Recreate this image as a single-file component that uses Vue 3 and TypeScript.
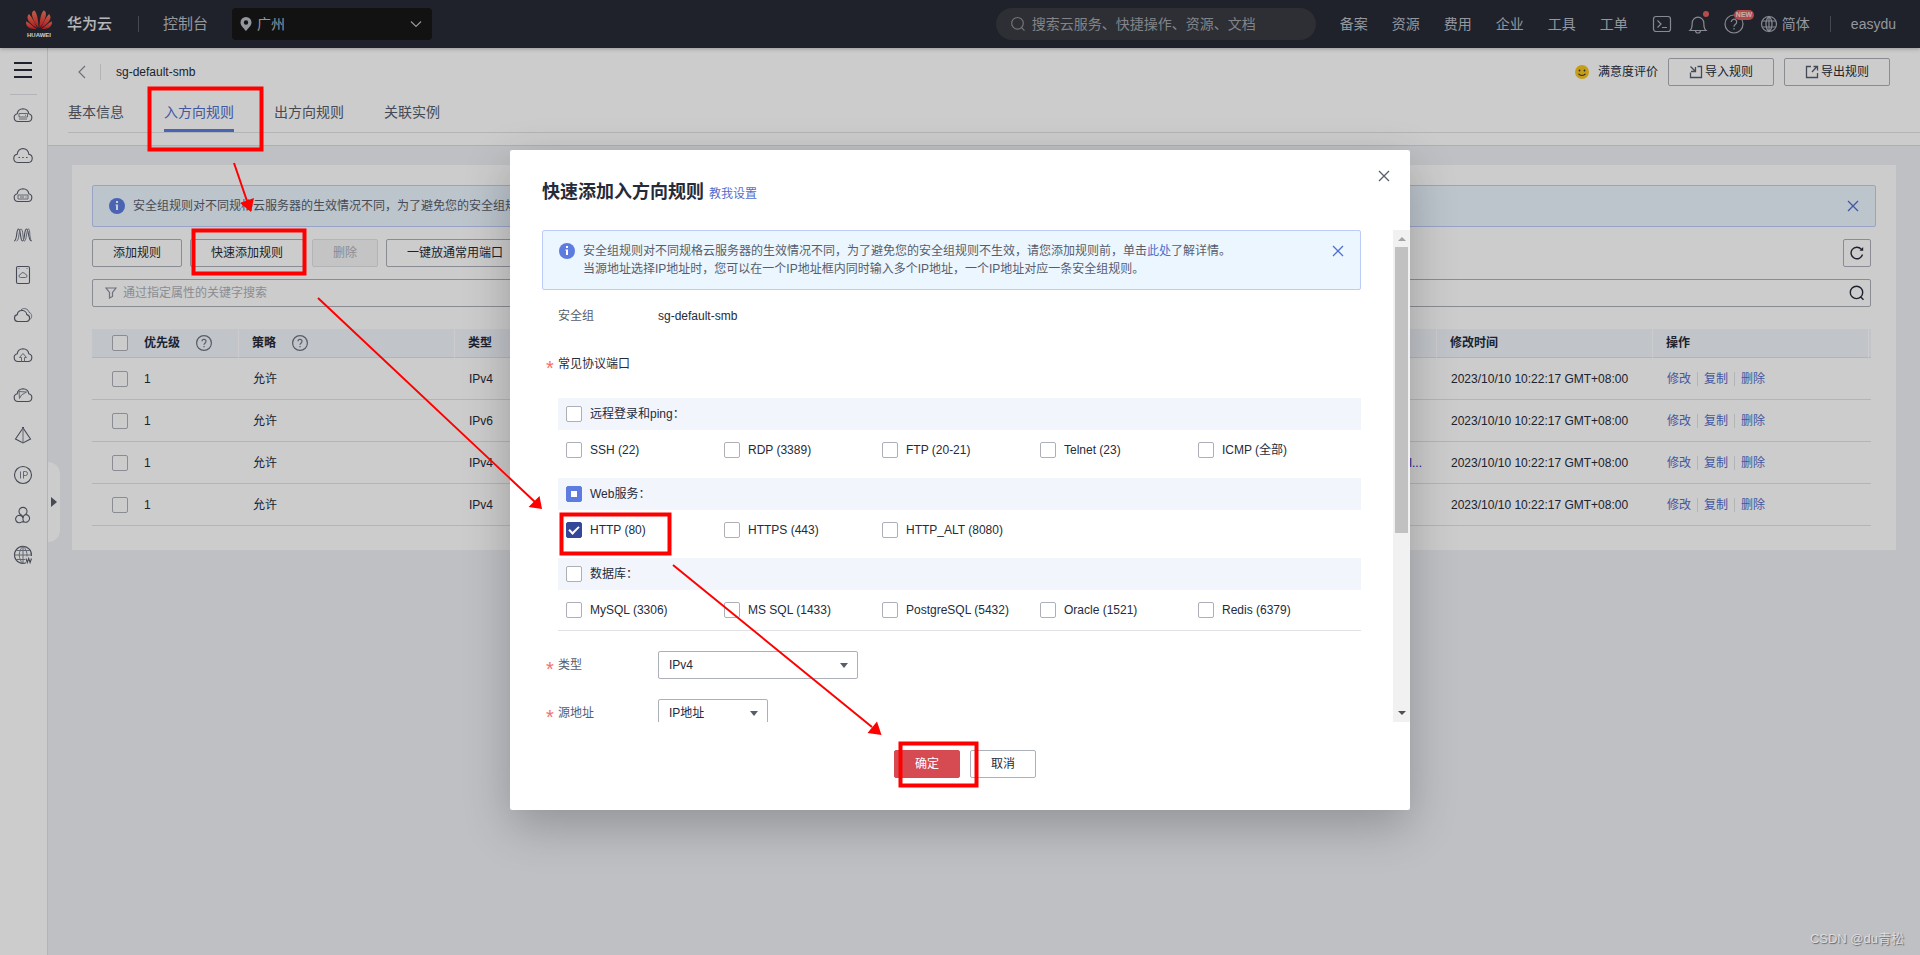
<script setup lang="ts">
import { ref } from 'vue'

interface Rule { type: string; source: string; time: string }
interface Port { label: string; checked: boolean }
interface Group { label: string; checked: boolean; partial: boolean; ports: Port[] }

const navLinks: string[] = ['备案', '资源', '费用', '企业', '工具', '工单']
const tabs: string[] = ['基本信息', '入方向规则', '出方向规则', '关联实例']
const activeTab = ref('入方向规则')

const time = '2023/10/10 10:22:17 GMT+08:00'
const rules: Rule[] = [
  { type: 'IPv4', source: '', time },
  { type: 'IPv6', source: '', time },
  { type: 'IPv4', source: 'l...', time },
  { type: 'IPv4', source: '', time },
]

const port = (label: string, checked = false): Port => ({ label, checked })
const groups = ref<Group[]>([
  {
    label: '远程登录和ping：', checked: false, partial: false,
    ports: [port('SSH (22)'), port('RDP (3389)'), port('FTP (20-21)'), port('Telnet (23)'), port('ICMP (全部)')],
  },
  {
    label: 'Web服务：', checked: false, partial: true,
    ports: [port('HTTP (80)', true), port('HTTPS (443)'), port('HTTP_ALT (8080)')],
  },
  {
    label: '数据库：', checked: false, partial: false,
    ports: [port('MySQL (3306)'), port('MS SQL (1433)'), port('PostgreSQL (5432)'), port('Oracle (1521)'), port('Redis (6379)')],
  },
])

const cloud = 'M5 16.500h10a3.900 3.900 0 0 0 .8-7.700A6 6 0 0 0 10 3.800a6 6 0 0 0-5.800 5A3.900 3.900 0 0 0 5 16.500z'
const sideIcons: { name: string; main: string; fine: string }[] = [
  { name: '云服务器', main: cloud, fine: 'M6 8.500h8.500V12H6zM6 14h8M12 10.200h1' },
  { name: '弹性云', main: 'M4.500 17.500h11a4.200 4.200 0 0 0 .3-8.300A6 6 0 0 0 10 3.500a6 6 0 0 0-5.800 5.700 4.200 4.200 0 0 0 .3 8.300zM5.500 12.500h1.500M9.200 12.500h1.500M13 12.500h1.500', fine: '' },
  { name: '裸金属', main: cloud, fine: 'M5 10h10v4H5zM7 12h4M12.500 12h1' },
  { name: '弹性伸缩', main: 'M1 16c3.500 0 2-12 4.500-12S7 16 9.500 16 11 4 13.500 4s1.500 12 5 12', fine: 'M3.500 16c3 0 2-12 4.500-12S9.500 16 11.500 16s2-12 4-12 .5 9 3 12' },
  { name: '镜像', main: 'M5 1.500h10a1.500 1.500 0 0 1 1.500 1.500v14a1.500 1.500 0 0 1-1.500 1.500H5A1.500 1.500 0 0 1 3.500 17V3A1.500 1.500 0 0 1 5 1.500z', fine: 'M7.500 12.500h5a1.500 1.500 0 0 0 0-3 2.600 2.600 0 0 0-5 0 1.500 1.500 0 0 0 0 3zM5.500 3.500h1M13.500 3.500h1' },
  { name: '云硬盘', main: 'M4.500 16.500h9a3.500 3.500 0 0 0 .3-6.900A4.600 4.600 0 0 0 9 5.500a4.600 4.600 0 0 0-4.700 4.100 3.500 3.500 0 0 0 .2 6.900z', fine: 'M8 4.800c3-2.600 7.500-.8 8 2.500 3.200 1 3.400 5.500 1.200 7' },
  { name: '云备份', main: cloud, fine: 'M8.500 16.500v-4H6.500L10 8.500l3.500 4h-2v4' },
  { name: '云容灾', main: cloud, fine: 'M6 6.500l.5 7L8.500 10l5-3-7.500-.5' },
  { name: '网络', main: 'M10 3L2.500 14 10 18l7.500-4zM9 2.500h2', fine: 'M10 3v15' },
  { name: '弹性公网IP', main: 'M10 1.500a8.500 8.500 0 1 0 0 17 8.500 8.500 0 0 0 0-17z', fine: 'M7.500 6.500v7M10.500 13.500v-7h2a2 2 0 0 1 0 4h-2' },
  { name: '集群', main: 'M7.500 9.500a4 4 0 1 1 5 0M10 13.500a3.700 3.700 0 1 0-1.300 3.400M7.500 9.600c1.500.6 2.500 1.900 2.500 3.900M12.500 9.600c-1.500.6-2.500 1.900-2.500 3.900a3.700 3.700 0 0 0 1.300 3.400M12.500 9.600a3.800 3.800 0 1 1-1.200 7.300M8.700 16.900h2.600', fine: '' },
  { name: '域名', main: 'M13 17.800A8.500 8.500 0 1 1 18.400 11M13 13.500l1.300 4 1.400-4 1.400 4 1.400-4', fine: 'M10 1.500C5 6 5 14 10 18.500M10 1.500c3 2.500 4.300 6 4 10M10 1.500v17M1.500 10h17M3 5.500h14M3 14.500h9' },
]
</script>

<template>
  <div class="page">
    <header class="topbar">
      <svg class="logo" viewBox="0 0 28 30" role="img" aria-label="HUAWEI">
        <defs>
          <linearGradient id="petal" x1="0" y1="0" x2="0" y2="1">
            <stop offset="0" stop-color="#f0785a" /><stop offset="1" stop-color="#e01f26" />
          </linearGradient>
        </defs>
        <g fill="url(#petal)">
          <path d="M13.500 19C13.300 11.500 12.500 5.500 9.500 1.500 7 2 6.500 5 7.500 8c1 4 3.500 8 6 11z" />
          <path d="M14.500 19c.2-7.500 1-13.500 4-17.500 2.500.5 3 3.500 2 6.500-1 4-3.500 8-6 11z" />
          <path d="M12.300 19.200C9.500 13.500 7.500 9 4 5 1.500 7.500 2.500 10.500 4.500 13c2 2.500 5 4.500 7.800 6.200z" />
          <path d="M15.700 19.200C18.500 13.500 20.500 9 24 5c2.500 2.500 1.500 5.500-.5 8-2 2.500-5 4.500-7.800 6.200z" />
          <path d="M11.500 19.900C8 17.200 5 14.400 1.300 12.200.5 15.300 2 17.700 4.500 18.900c2 .9 4.500 1 7 1z" />
          <path d="M16.500 19.900c3.500-2.700 6.500-5.500 10.200-7.700.8 3.100-.7 5.500-3.200 6.700-2 .9-4.500 1-7 1z" />
        </g>
        <text x="14" y="28" text-anchor="middle" font-size="6" font-weight="bold" fill="#fff">HUAWEI</text>
      </svg>
      <span class="brand">华为云</span>
      <i class="bar-divider"></i>
      <a href="#" class="console">控制台</a>
      <button class="region" type="button">
        <svg width="12" height="16" viewBox="0 0 12 16"><path fill="#b9bdc6" fill-rule="evenodd" d="M6 1a5.500 5.500 0 0 0-5.500 5.500C.5 9.500 3.500 12 6 15c2.500-3 5.500-5.500 5.500-8.500A5.500 5.500 0 0 0 6 1zm0 3.300a2.200 2.200 0 1 1 0 4.400 2.200 2.200 0 0 1 0-4.400z" /></svg>
        <span>广州</span>
        <svg class="end" width="12" height="8" viewBox="0 0 12 8"><path d="M1 1.500l5 5 5-5" fill="none" stroke="#b9bdc6" stroke-width="1.200" /></svg>
      </button>
      <div class="global-search">
        <svg width="16" height="16" viewBox="0 0 16 16"><path d="M7.500 1.500a5.800 5.800 0 1 0 0 11.600 5.800 5.800 0 0 0 0-11.600zM11.500 11.500l3 3.200" fill="none" stroke="#8d9097" stroke-width="1.200" /></svg>
        <input type="text" aria-label="搜索" placeholder="搜索云服务、快捷操作、资源、文档" />
      </div>
      <nav class="nav">
        <a v-for="l in navLinks" :key="l" href="#">{{ l }}</a>
      </nav>
      <div class="tools">
        <svg width="20" height="20" viewBox="0 0 20 20" class="line"><rect x="1.500" y="2.500" width="17" height="15" rx="2.500" /><path d="M5.500 6.500L9 10l-3.500 3.500M10 13.500h5" /></svg>
        <span class="badge-box">
          <svg width="20" height="20" viewBox="0 0 20 20" class="line"><path d="M2 16.500c1.800-1.500 2.200-3.500 2.200-7.500a5.800 5.800 0 0 1 11.600 0c0 4 .4 6 2.200 7.500zM7.500 16.500a2.500 2.500 0 0 0 5 0" /></svg>
          <i class="dot"></i>
        </span>
        <span class="badge-box">
          <svg width="20" height="20" viewBox="0 0 20 20" class="line"><circle cx="10" cy="10" r="9" /><path d="M7.300 8a2.700 2.700 0 1 1 4.200 2.200c-1 .7-1.500 1.200-1.500 2.500M10 14v1.500" /></svg>
          <b class="new">NEW</b>
        </span>
        <a href="#" class="lang">
          <svg width="18" height="18" viewBox="0 0 18 18" class="line"><circle cx="9" cy="9" r="7.500" /><path d="M9 1.500C5 5 5 13 9 16.500 13 13 13 5 9 1.500zM9 1.500v15M2.300 6h13.400M2.300 12h13.400" /></svg>
          简体
        </a>
      </div>
      <i class="bar-divider user-divider"></i>
      <a href="#" class="user">easydu</a>
    </header>

    <div class="frame">
      <aside class="side">
        <button type="button" class="menu" aria-label="菜单"><i></i><i></i><i></i></button>
        <hr />
        <a v-for="ic in sideIcons" :key="ic.name" href="#" :aria-label="ic.name">
          <svg width="20" height="20" viewBox="0 0 20 20"><path :d="ic.main" /><path v-if="ic.fine" class="fine" :d="ic.fine" /></svg>
        </a>
        <button type="button" class="handle" aria-label="展开"></button>
      </aside>

      <main class="main">
        <section class="head">
          <div class="title-row">
            <a href="#" class="back" aria-label="返回"><svg width="9" height="14" viewBox="0 0 9 14"><path d="M8 1L2 7l6 6" fill="none" stroke="#8a8e99" stroke-width="1.200" /></svg></a>
            <i class="sep"></i>
            <h1>sg-default-smb</h1>
            <div class="head-actions">
              <svg width="16" height="16" viewBox="0 0 16 16"><circle cx="8" cy="8" r="7" fill="#f7c51e" /><circle cx="5.500" cy="6.500" r=".9" fill="#333" /><circle cx="10.500" cy="6.500" r=".9" fill="#333" /><path d="M4.500 9.800c1.500 2.200 5.500 2.200 7 0" fill="none" stroke="#333" stroke-width="1.100" /></svg>
              <a href="#" class="rate">满意度评价</a>
              <button type="button" class="btn io"><svg width="14" height="14" viewBox="0 0 14 14"><path d="M1.500 7.500v5h11v-11H8.500" /><path d="M1.500 1.500L6 6M6.500 2v4.500H2" /></svg>导入规则</button>
              <button type="button" class="btn io"><svg width="14" height="14" viewBox="0 0 14 14"><path d="M6 1.500H1.500v11h11V8" /><path d="M7 7l5-5.500M8.500 1.500H12.500v4" /></svg>导出规则</button>
            </div>
          </div>
          <nav class="tabs">
            <a v-for="t in tabs" :key="t" href="#" :class="{ on: t === activeTab }" @click.prevent="activeTab = t">{{ t }}</a>
          </nav>
        </section>

        <section class="card">
          <div class="alert page-alert">
            <svg class="info" width="16" height="16" viewBox="0 0 16 16"><circle cx="8" cy="8" r="8" fill="#5e7ce0" /><path d="M7 3h2v2H7zM6.500 6.500H9V12H7V7.500h-.5z" fill="#fff" /></svg>
            <p>安全组规则对不同规格云服务器的生效情况不同，为了避免您的安全组规则</p>
            <button type="button" class="x" aria-label="关闭提示"><svg width="12" height="12" viewBox="0 0 12 12"><path d="M1 1l10 10M11 1L1 11" /></svg></button>
          </div>
          <div class="content">
            <div class="toolbar">
              <button type="button" class="btn">添加规则</button>
              <button type="button" class="btn">快速添加规则</button>
              <button type="button" class="btn" disabled>删除</button>
              <button type="button" class="btn">一键放通常用端口</button>
              <button type="button" class="btn refresh" aria-label="刷新"><svg width="16" height="16" viewBox="0 0 16 16"><path d="M13.500 9.500A5.800 5.800 0 1 1 12.300 4.200" fill="none" stroke="#252b3a" stroke-width="1.400" /><path d="M14.200 2v3.800H10.500z" fill="#252b3a" /></svg></button>
            </div>
            <div class="filter">
              <svg width="12" height="12" viewBox="0 0 12 12"><path d="M1 1h10L7.500 5.500v4L4.500 11V5.500z" fill="none" stroke="#8a8e99" stroke-width="1.200" /></svg>
              <input type="text" aria-label="过滤" placeholder="通过指定属性的关键字搜索" />
              <svg width="16" height="16" viewBox="0 0 16 16"><path d="M7.500 1.200a6.200 6.200 0 1 0 0 12.400 6.200 6.200 0 0 0 0-12.400zM11.500 11.800l3 3" fill="none" stroke="#252b3a" stroke-width="1.400" /></svg>
            </div>
            <table>
              <colgroup>
                <col class="c-check" /><col class="c-prio" /><col class="c-wide" /><col class="c-wide" /><col />
                <col class="c-wide" /><col class="c-wide" /><col class="c-end" />
              </colgroup>
              <thead>
                <tr>
                  <th><input type="checkbox" class="cb" aria-label="全选" /></th>
                  <th class="prio"><span class="th">优先级 <svg width="16" height="16" viewBox="0 0 16 16" class="q"><circle cx="8" cy="8" r="7.400" /><path d="M6 6.300a2 2 0 1 1 3.200 1.600C8.400 8.500 8 8.800 8 9.800M8 11v1.200" /></svg></span></th>
                  <th><span class="th">策略 <svg width="16" height="16" viewBox="0 0 16 16" class="q"><circle cx="8" cy="8" r="7.400" /><path d="M6 6.300a2 2 0 1 1 3.200 1.600C8.400 8.500 8 8.800 8 9.800M8 11v1.200" /></svg></span></th>
                  <th>类型</th><th></th><th>修改时间</th><th>操作</th><th></th>
                </tr>
              </thead>
              <tbody>
                <tr v-for="(r, i) in rules" :key="i">
                  <td><input type="checkbox" class="cb" :aria-label="'选择规则' + (i + 1)" /></td>
                  <td class="prio">1</td>
                  <td>允许</td>
                  <td>{{ r.type }}</td>
                  <td class="src">{{ r.source }}</td>
                  <td>{{ r.time }}</td>
                  <td><span class="ops"><a href="#">修改</a><a href="#">复制</a><a href="#">删除</a></span></td>
                  <td></td>
                </tr>
              </tbody>
            </table>
          </div>
        </section>
      </main>
    </div>

    <div class="mask">
      <form class="modal" role="dialog" aria-labelledby="dlg-title" @submit.prevent>
        <div class="modal-head">
          <h2 id="dlg-title">快速添加入方向规则</h2>
          <a href="#">教我设置</a>
          <button type="button" class="x close" aria-label="关闭"><svg width="12" height="12" viewBox="0 0 12 12"><path d="M1 1l10 10M11 1L1 11" /></svg></button>
        </div>
        <div class="modal-body">
          <div class="scroll">
            <div class="alert">
              <svg class="info" width="16" height="16" viewBox="0 0 16 16"><circle cx="8" cy="8" r="8" fill="#5e7ce0" /><path d="M7 3h2v2H7zM6.500 6.500H9V12H7V7.500h-.5z" fill="#fff" /></svg>
              <p>安全组规则对不同规格云服务器的生效情况不同，为了避免您的安全组规则不生效，请您添加规则前，单击<a href="#">此处</a>了解详情。<br />当源地址选择IP地址时，您可以在一个IP地址框内同时输入多个IP地址，一个IP地址对应一条安全组规则。</p>
              <button type="button" class="x" aria-label="关闭提示"><svg width="12" height="12" viewBox="0 0 12 12"><path d="M1 1l10 10M11 1L1 11" /></svg></button>
            </div>
            <div class="field">
              <span class="label">安全组</span><span class="dark">sg-default-smb</span>
            </div>
            <div class="field"><span class="label req dark">常见协议端口</span></div>
            <div class="groups">
              <fieldset v-for="g in groups" :key="g.label">
                <label class="group-head">
                  <input v-model="g.checked" type="checkbox" class="cb" :indeterminate="g.partial" />{{ g.label }}
                </label>
                <div class="ports">
                  <label v-for="p in g.ports" :key="p.label"><input v-model="p.checked" type="checkbox" class="cb" />{{ p.label }}</label>
                </div>
              </fieldset>
            </div>
            <div class="field select-field">
              <label class="label req" for="ip-type">类型</label>
              <span class="select wide"><select id="ip-type"><option>IPv4</option></select></span>
            </div>
            <div class="field select-field">
              <label class="label req" for="source">源地址</label>
              <span class="select"><select id="source"><option>IP地址</option></select></span>
            </div>
          </div>
          <div class="scrollbar"><i class="up"></i><i class="thumb"></i><i class="down"></i></div>
        </div>
        <div class="modal-foot">
          <button type="submit" class="btn primary">确定</button>
          <button type="button" class="btn">取消</button>
        </div>
      </form>
    </div>

    <svg class="marks" width="1920" height="955" viewBox="0 0 1920 955" aria-hidden="true">
      <g fill="none" stroke="#f00" stroke-width="4">
        <rect x="149.500" y="88.500" width="112" height="61" /><rect x="193.500" y="230.500" width="111" height="43" />
        <rect x="561.500" y="514.500" width="108" height="39" /><rect x="900.500" y="743.500" width="76" height="42" />
      </g>
      <g stroke="#f00" stroke-width="2"><path d="M234 163L247 201M318 298L535 502M673 565L872 727" /></g>
      <g fill="#f00"><path d="M251 212L240 203 254 198zM542 509L528.500 507 539.500 496zM881.500 735L867.500 733 877 721.500z" /></g>
    </svg>
    <span class="watermark">CSDN @du青松</span>
  </div>
</template>

<style>
html, body { margin: 0; height: 100%; }
</style>

<style scoped>
.page { position: relative; min-height: 100vh; display: flex; flex-direction: column; background: #eff0f5; font: 12px/18px "Liberation Sans", "Noto Sans CJK SC", sans-serif; color: #252b3a; overflow: hidden; }
.page *, .page *::before { box-sizing: border-box; }
a { color: #526ecc; text-decoration: none; }
button, input, select { font: inherit; color: inherit; margin: 0; padding: 0; }
button { background: none; border: 0; }
h1, h2, p, fieldset, hr { margin: 0; padding: 0; border: 0; font-weight: normal; }
svg { flex: none; display: block; }

.topbar { height: 48px; display: flex; align-items: center; padding: 0 24px 0 25px; background: #272b35; font-size: 14px; color: #b9bdc6; box-shadow: 0 1px 4px rgba(0, 0, 0, .25); z-index: 1; }
.topbar a { color: #b9bdc6; white-space: nowrap; }
.logo { width: 28px; height: 30px; }
.brand { margin-left: 14px; font-size: 15px; font-weight: 500; color: #e4e6ea; }
.bar-divider { width: 1px; height: 16px; background: #575b66; margin-left: 26px; }
.topbar .console { margin-left: 24px; font-size: 15px; }
.region { display: flex; align-items: center; gap: 5px; width: 200px; height: 32px; margin-left: 24px; padding: 0 10px 0 8px; border-radius: 4px; background: #171717; text-align: left; }
.region .end { margin-left: auto; }
.global-search { display: flex; align-items: center; gap: 6px; width: 320px; height: 32px; margin-left: auto; padding: 0 14px; border-radius: 16px; background: #393b41; }
.global-search input { flex: 1; min-width: 0; border: 0; background: none; outline: 0; }
.global-search input::placeholder { color: #a3a6ad; }
.nav { display: flex; gap: 24px; margin-left: 24px; }
.tools { display: flex; align-items: center; gap: 16px; margin-left: 24px; }
.line { fill: none; stroke: #a9adb6; stroke-width: 1.200; }
.badge-box { position: relative; }
.dot { position: absolute; right: -1px; top: -3px; width: 6px; height: 6px; border-radius: 50%; background: #e56060; }
.new { position: absolute; left: 10px; top: -4px; padding: 0 2px; border-radius: 5px; background: #e05c5c; color: #f4dede; font-size: 7px; line-height: 10px; }
.lang { display: flex; align-items: center; gap: 4px; }
.user-divider { margin-left: 20px; }
.topbar .user { margin-left: 20px; }

.frame { flex: 1; display: flex; }
.side { position: relative; width: 48px; background: #fff; border-right: 1px solid #dfe1e6; display: flex; flex-direction: column; align-items: flex-start; }
.side > a { height: 40px; width: 46px; display: flex; align-items: center; justify-content: center; }
.side > a svg { fill: none; stroke: #575d6c; stroke-width: 1.100; }
.side > a .fine { stroke: #7d8290; stroke-width: 1; }
.menu { display: flex; flex-direction: column; gap: 5px; width: 18px; margin: 14px 0 16px 14px; }
.menu i { height: 2px; background: #252b3a; }
.side hr { width: 27px; height: 1px; margin-left: 10px; background: #dfe1e6; }
.handle { position: absolute; left: 48px; top: 414px; width: 12px; height: 80px; border-radius: 0 12px 12px 0; background: #fff; }
.handle::before { content: ""; display: block; width: 6px; margin-left: 3px; border: 5px solid transparent; border-left: 6px solid #575d6c; border-right: 0; }
.main { flex: 1; min-width: 0; }

.head { height: 98px; background: #fff; border-bottom: 1px solid #d9dbdf; padding-left: 20px; }
.title-row { display: flex; align-items: center; height: 48px; padding: 0 30px 0 9px; }
.sep { width: 1px; height: 16px; background: #dfe1e6; margin: 0 15px 0 14px; }
h1 { font-size: 12px; }
.head-actions { margin-left: auto; display: flex; align-items: center; }
.rate { margin: 0 10px 0 8px; color: #252b3a; }
.btn { height: 28px; padding: 0 20px; border: 1px solid #adb0b8; border-radius: 2px; white-space: nowrap; }
.btn:disabled { color: #adb0b8; background: #f5f5f6; border-color: #dfe1e6; }
.io { display: flex; align-items: center; justify-content: center; gap: 2px; width: 106px; padding: 0 18px; }
.io svg { fill: none; stroke: #575d6c; stroke-width: 1.300; }
.io + .io { margin-left: 10px; }
.tabs { display: flex; gap: 40px; height: 37px; border-bottom: 1px solid #dfe1e6; }
.tabs a { height: 36px; padding-top: 7px; font-size: 14px; color: #575d6c; border-bottom: 3px solid transparent; }
.tabs a.on { color: #526ecc; border-color: #5e7ce0; }

.card { margin: 19px 24px 0; padding: 20px 20px 24px; background: #fff; }
.alert { display: flex; align-items: flex-start; padding: 11px 20px 11px 16px; background: #ebf6ff; border: 1px solid #beccfa; border-radius: 2px; color: #575d6c; }
.alert .info { margin-top: 1px; }
.alert p { flex: 1; margin-left: 8px; white-space: nowrap; overflow: hidden; }
.x { padding: 3px 0; }
.x svg { fill: none; stroke: #526ecc; stroke-width: 1.300; }
.page-alert { height: 42px; padding-right: 16px; }
.content { padding-right: 5px; }
.toolbar { display: flex; gap: 8px; padding: 12px 0; }
.refresh { width: 28px; margin-left: auto; display: flex; align-items: center; justify-content: center; }
.toolbar .refresh { padding: 0; }
.filter { display: flex; align-items: center; height: 28px; padding: 0 5px 0 12px; border: 1px solid #adb0b8; border-radius: 2px; }
.filter input { flex: 1; min-width: 0; margin-left: 6px; border: 0; background: none; outline: 0; }
.filter input::placeholder { color: #adb0b8; }

table { width: 100%; margin-top: 22px; table-layout: fixed; border-collapse: separate; border-spacing: 0; }
.c-check { width: 48px; }
.c-prio { width: 98px; }
.c-wide { width: 216px; }
.c-end { width: 3px; }
th, td { padding: 0 0 0 15px; text-align: left; white-space: nowrap; border-bottom: 1px solid #dfe1e6; }
th { height: 29px; padding-left: 13px; background: #f2f5fc; font-weight: bold; border-left: 1px solid #fff; }
th:nth-child(-n+2) { border-left: 0; }
th:first-child, td:first-child { padding-left: 20px; }
th:last-child, td:last-child { padding: 0; }
.prio { padding-left: 4px; }
td { height: 42px; }
.th { display: flex; align-items: center; gap: 16px; }
.q { fill: none; stroke: #6d7280; stroke-width: 1.200; }
td.src { text-align: right; padding: 0 14px 0 0; color: #2418b8; }
.ops { display: flex; align-items: center; }
.ops a + a { margin-left: 6px; padding-left: 6px; border-left: 1px solid #dfe1e6; line-height: 14px; }

.cb { appearance: none; display: block; flex: none; width: 16px; height: 16px; border: 1px solid #adb0b8; border-radius: 2px; background: #fff; }
.cb:checked { background: #344899; border-color: #344899; }
.cb:checked::before { content: ""; display: block; width: 10px; height: 6px; margin: 3px 0 0 2px; border: solid #fff; border-width: 0 0 2px 2px; transform: rotate(-45deg); }
.cb:indeterminate { background: #5e7ce0; border-color: #5e7ce0; }
.cb:indeterminate::before { content: ""; display: block; width: 6px; height: 6px; margin: 4px; background: #fff; }

.mask { position: absolute; inset: 0; z-index: 2; display: flex; justify-content: center; align-items: flex-start; padding-top: 150px; background: rgba(0, 0, 0, .2); }
.modal { width: 900px; padding-bottom: 32px; background: #fff; border-radius: 2px; box-shadow: 0 16px 48px rgba(0, 0, 0, .24); }
.modal-head { display: flex; align-items: baseline; gap: 5px; height: 80px; padding: 29px 20px 0 32px; }
h2 { font-size: 18px; line-height: 26px; font-weight: bold; }
.close { align-self: flex-start; margin: -12px 0 0 auto; }
.close svg { stroke: #575d6c; }
.modal-body { display: flex; height: 492px; overflow: hidden; }
.scroll { flex: 1; min-width: 0; height: 492px; overflow: hidden; padding: 0 32px; }
.scroll .alert { height: 60px; padding-right: 16px; }
.field { display: flex; align-items: center; height: 18px; margin-top: 30px; padding-left: 16px; color: #252b3a; }
.alert + .field { margin-top: 17px; }
.label { position: relative; width: 100px; color: #575d6c; }
.dark { color: #252b3a; }
.req::before { content: "*"; position: absolute; left: -12px; top: 4px; font-size: 20px; color: #f66f6a; }
.groups { margin: 25px 0 0 16px; border-bottom: 1px solid #dfe1e6; }
.group-head, .ports label { display: flex; align-items: center; gap: 8px; }
.group-head { height: 32px; padding-left: 8px; background: #f2f5fc; }
.ports { display: grid; grid-template-columns: repeat(5, 158px); align-items: start; height: 48px; padding: 11px 0 0 8px; }
fieldset:last-child .ports { height: 40px; }
.select-field { height: 28px; margin-top: 20px; }
.select { position: relative; display: block; width: 110px; height: 28px; }
.select.wide { width: 200px; }
.select::after { content: ""; position: absolute; right: 10px; top: 12px; border: 4px solid transparent; border-top: 5px solid #575d6c; border-bottom: 0; pointer-events: none; }
.select select { appearance: none; width: 100%; height: 28px; padding: 0 10px; border: 1px solid #adb0b8; border-radius: 2px; background: #fff; color: #252b3a; }
.scrollbar { width: 17px; display: flex; flex-direction: column; align-items: center; background: #f1f1f1; }
.scrollbar .up { border: 4px solid transparent; border-bottom-color: #a3a3a3; border-top: 0; margin: 7px 0 6px; }
.scrollbar .thumb { width: 13px; height: 286px; background: #c1c1c1; }
.scrollbar .down { border: 4px solid transparent; border-top-color: #505050; border-bottom: 0; margin: auto 0 7px; }
.modal-foot { display: flex; justify-content: center; gap: 10px; height: 56px; padding: 28px 0 0 10px; }
.primary { background: #d64a52; border-color: #d64a52; color: #fff; }

.marks { position: absolute; left: 0; top: 0; z-index: 3; pointer-events: none; }
.watermark { position: absolute; right: 16px; bottom: 7px; z-index: 3; font-size: 13px; color: #dcdde0; text-shadow: 1px 1px 1px #666; }
</style>
